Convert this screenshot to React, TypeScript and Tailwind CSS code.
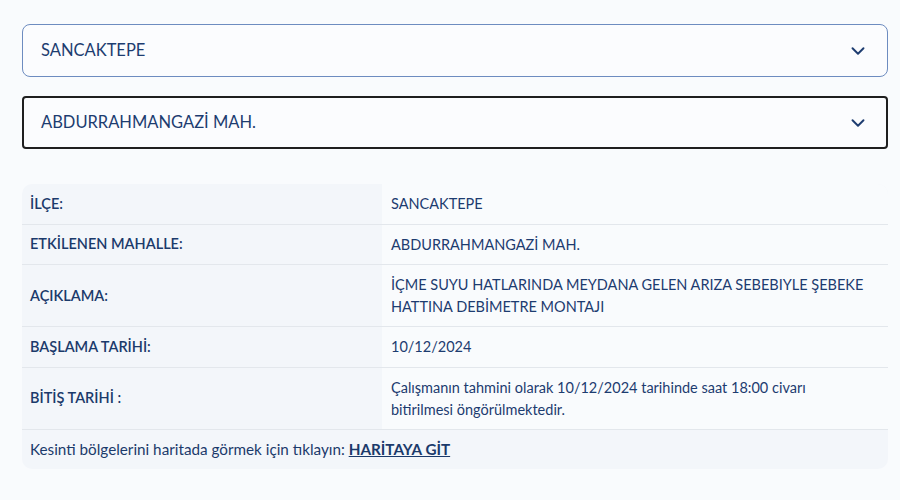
import { ChevronDown } from 'lucide-react';

const rows: { label: string; value: string }[] = [
  { label: 'İLÇE:', value: 'SANCAKTEPE' },
  { label: 'ETKİLENEN MAHALLE:', value: 'ABDURRAHMANGAZİ MAH.' },
  {
    label: 'AÇIKLAMA:',
    value: 'İÇME SUYU HATLARINDA MEYDANA GELEN ARIZA SEBEBIYLE ŞEBEKE HATTINA DEBİMETRE MONTAJI',
  },
  { label: 'BAŞLAMA TARİHİ:', value: '10/12/2024' },
  {
    label: 'BİTİŞ TARİHİ :',
    value: 'Çalışmanın tahmini olarak 10/12/2024 tarihinde saat 18:00 civarı bitirilmesi öngörülmektedir.',
  },
];

const SelectBox = ({ value, active }: { value: string; active?: boolean }) => (
  <div
    className={
      active
        ? 'flex h-[53px] items-center justify-between rounded-[4px] border-2 border-[#1f1f1f] bg-[#fbfcfe] pl-[17px] pr-[17px]'
        : 'flex h-[53px] items-center justify-between rounded-[8px] border border-[#6d8cc0] bg-[#fbfcfe] pl-[18px] pr-[18px]'
    }
  >
    <span className="text-[16.5px] text-[#1d3c70]">{value}</span>
    <ChevronDown className="h-[22px] w-[22px] text-[#1d3c70]" strokeWidth={2.1} />
  </div>
);

export default function App() {
  return (
    <div
      className="min-h-[500px] bg-[#f9fbfd] px-[22px] pt-[24px]"
      style={{ fontFamily: 'Lato, "Noto Sans", sans-serif' }}
    >
      <div className="flex w-[866px] flex-col gap-[19px]">
        <SelectBox value="SANCAKTEPE" />
        <SelectBox value="ABDURRAHMANGAZİ MAH." active />
      </div>

      <div className="mt-[35px] w-[866px] overflow-hidden rounded-[10px] bg-[#f3f6fa]">
        {rows.map((row) => (
          <div key={row.label} className="grid grid-cols-[360px_1fr] border-b border-[#e3e7ec]">
            <div className="flex items-center px-[8px] text-[14.5px] font-semibold text-[#1b3a6b]">
              {row.label}
            </div>
            <div className="flex min-h-[39.5px] items-center bg-[#f9fbfd] pb-[8px] pl-[9px] pr-[18px] pt-[9px] text-[14.5px] leading-[22px] text-[#1d3c70]">
              {row.value}
            </div>
          </div>
        ))}
        <div className="flex h-[39px] items-center px-[8px] text-[15.25px] text-[#1b3a6b]">
          <span>Kesinti bölgelerini haritada görmek için tıklayın:&nbsp;</span>
          <a href="#" className="font-bold underline">
            HARİTAYA GİT
          </a>
        </div>
      </div>
    </div>
  );
}
